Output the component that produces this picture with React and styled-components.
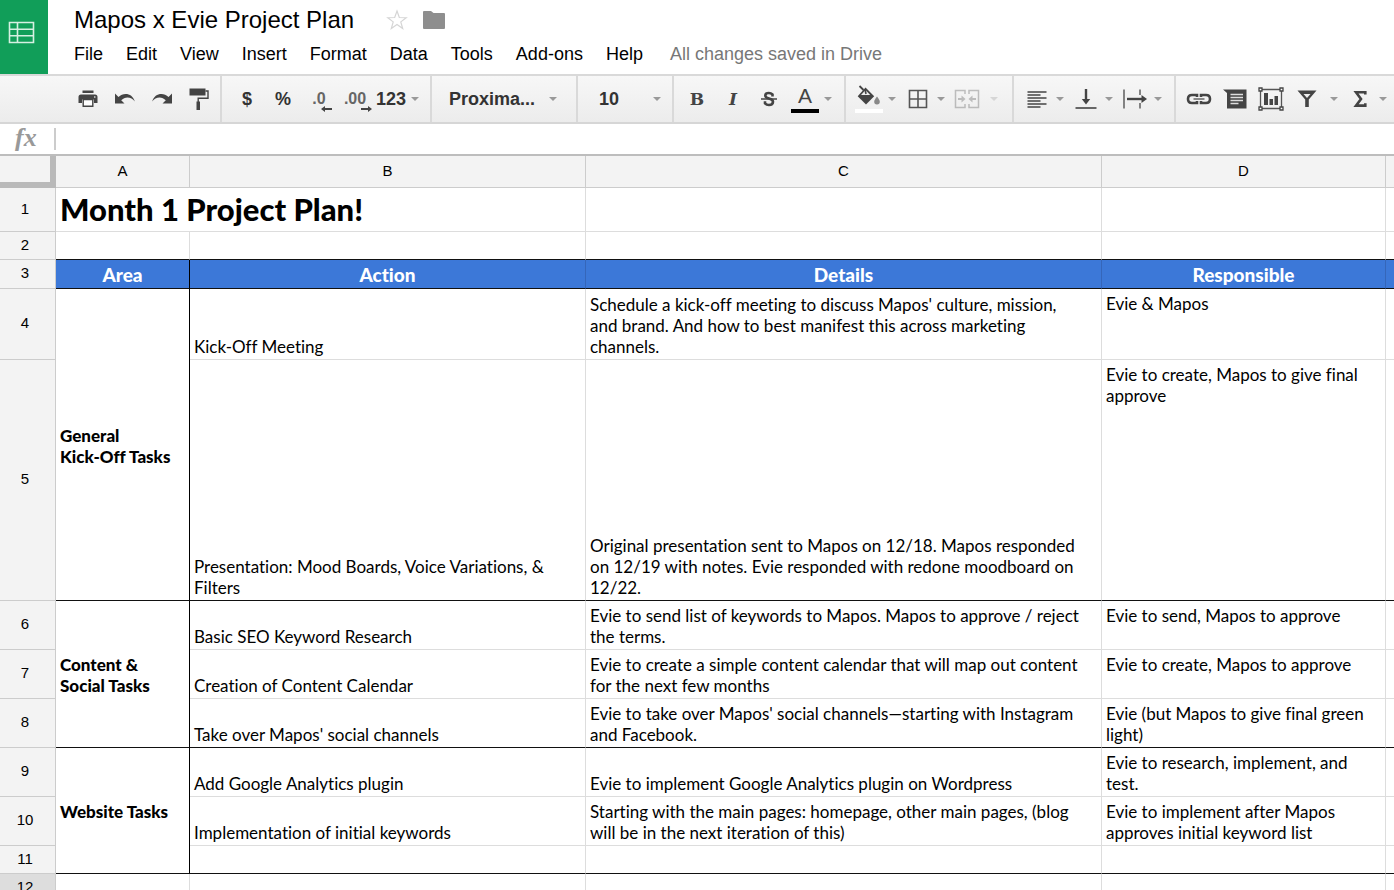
import React from 'react';
import styled, { createGlobalStyle } from 'styled-components';

const GlobalStyle = createGlobalStyle`
  * {
    box-sizing: border-box;
  }
  body {
    margin: 0;
    background: #fff;
    color: #000;
    font-family: "Liberation Sans", Arial, sans-serif;
  }
  button, input, select {
    margin: 0;
    padding: 0;
    border: 0;
    background: none;
    color: inherit;
    font: inherit;
  }
`;

const Page = styled.div`
  display: flex;
  flex-direction: column;
  height: 100vh;
  overflow: hidden;
`;

const Header = styled.header`
  display: flex;
  height: 74px;
  flex: none;
`;
const HomeLink = styled.a`
  width: 48px;
  padding: 21px 0 0 8px;
  background: #119e59;
`;
const HeaderMain = styled.div`
  display: flex;
  flex-direction: column;
  padding: 4px 0 0 26px;
`;
const TitleRow = styled.div`
  display: flex;
  align-items: center;
  height: 32px;
`;
const Title = styled.h1`
  margin: 0 32px 0 0;
  font-size: 24px;
  font-weight: 400;
  line-height: 32px;
  white-space: nowrap;
`;
const TitleButton = styled.button`
  display: flex;
  margin-right: 14px;
`;
const MenuBar = styled.nav`
  display: flex;
  align-items: center;
  gap: 23px;
  height: 36px;
  font-size: 18px;
  white-space: nowrap;
`;
const SaveStatus = styled.span`
  margin-left: 4px;
  color: #777;
`;

const Toolbar = styled.div`
  display: flex;
  flex: none;
  height: 50px;
  border-top: 2px solid #d9d9d9;
  border-bottom: 2px solid #d6d6d6;
  background: linear-gradient(#f7f7f7, #ececec);
  overflow: hidden;
`;
const ToolGroup = styled.div`
  display: flex;
  flex: none;
  align-items: center;
  width: ${(props) => props.$width}px;
  padding-left: ${(props) => props.$indent || 5}px;
  border-right: 2px solid #d9d9d9;
  &:last-child {
    flex: 1 0 auto;
    border-right: 0;
  }
`;
const ToolButton = styled.button`
  display: flex;
  flex: none;
  align-items: center;
  justify-content: center;
  width: 36px;
  height: 44px;
  color: ${(props) => (props.$dark ? '#333' : '#444')};
  font-size: 18px;
  font-weight: 700;
`;
const HistoryButton = styled(ToolButton)`
  width: 37px;
`;
const MenuButton = styled.button`
  display: flex;
  flex: none;
  align-items: center;
  width: ${(props) => (props.$wide ? 53 : 49)}px;
  height: 44px;
  color: #444;
  opacity: ${(props) => (props.disabled ? 0.3 : 1)};
  > span {
    display: flex;
    justify-content: center;
    width: 36px;
    margin-right: ${(props) => (props.$wide ? 4 : 0)}px;
  }
`;
const FormatButton = styled.button`
  display: flex;
  align-items: center;
  gap: 4px;
  padding-left: 3px;
  color: #333;
  font-size: 18px;
  font-weight: 700;
`;
const SelectBox = styled.label`
  display: flex;
  flex: 1;
  align-items: center;
  padding-right: ${(props) => props.$inset}px;
  color: #333;
  select {
    flex: 1;
    min-width: 0;
    appearance: none;
    font-size: 18px;
    font-weight: 700;
  }
`;
const Decimal = styled.span`
  display: flex;
  flex-direction: column;
  padding-top: 5px;
  color: #666;
  font-size: 16px;
  line-height: 14px;
  svg {
    align-self: flex-end;
    margin-right: -6px;
  }
`;
const Bold = styled.span`
  font-family: "DejaVu Serif", serif;
  font-size: 17px;
  font-weight: 700;
`;
const Italic = styled(Bold)`
  font-style: italic;
`;
const Strike = styled.span`
  font-size: 18px;
`;
const Swatch = styled.span`
  display: flex;
  flex-direction: column;
  align-items: center;
  width: 28px;
  height: 28px;
  border-bottom: 4px solid ${(props) => props.$color};
  font-size: 21px;
  line-height: 22px;
`;

const FormulaBar = styled.label`
  display: flex;
  flex: none;
  align-items: center;
  height: 32px;
  border-bottom: 2px solid #bdbdbd;
  input {
    flex: 1;
    height: 22px;
    padding-left: 6px;
    border-left: 2px solid #ccc;
    outline: 0;
  }
`;
const FxLabel = styled.span`
  width: 54px;
  padding: 0 0 2px 15px;
  color: #999;
  font-family: "Liberation Serif", serif;
  font-size: 26px;
  font-style: italic;
  font-weight: 700;
  line-height: 26px;
`;

const Sheet = styled.table`
  width: 100%;
  table-layout: fixed;
  border-collapse: separate;
  border-spacing: 0;
  font-family: Lato, sans-serif;
  font-size: 17px;
  font-variant-ligatures: none;
  line-height: 21px;
`;
const Column = styled.col`
  width: ${(props) => props.$width}px;
`;
const Row = styled.tr`
  height: ${(props) => props.$height}px;
  > :last-child {
    border-right: 0;
  }
`;
const Corner = styled.th`
  padding: 0;
  border: solid #b9b9b9;
  border-width: 0 6px 6px 0;
  background: #f3f3f3;
`;
const Heading = styled.th`
  padding: 0 0 2px;
  border: solid #ccc;
  border-width: 0 1px 1px 0;
  background: ${(props) => (props.$selected ? '#ddd' : '#f3f3f3')};
  font-family: "Liberation Sans", Arial, sans-serif;
  font-size: 15px;
  font-weight: 400;
  line-height: 20px;
`;
const RowHeading = styled(Heading)`
  padding-right: 5px;
`;
const Cell = styled.td`
  padding: 4px 4px 2px;
  border: solid #ddd;
  border-width: 0 1px 1px 0;
  border-bottom-color: ${(props) => (props.$ruled ? '#111' : '#ddd')};
  vertical-align: ${(props) => (props.$top ? 'top' : 'bottom')};
  white-space: pre-line;
`;
const AreaCell = styled(Cell)`
  border-right-color: #000;
  font-weight: 900;
  vertical-align: middle;
`;
const SheetTitle = styled(Cell)`
  padding: 2px 4px 3px;
  font-size: 31px;
  font-weight: 900;
  line-height: 36px;
  vertical-align: middle;
`;
const BlueHead = styled.th`
  padding: 0;
  border: solid #111;
  border-width: 0 1px 1px 0;
  border-right-color: ${(props) => (props.$divider ? '#000' : '#3566ba')};
  background: #3c78d8;
  color: #fff;
  font-size: 19px;
  font-weight: 900;
`;

const rows = [
  {
    number: 4,
    height: 71,
    area: 'General\nKick-Off Tasks',
    span: 2,
    action: 'Kick-Off Meeting',
    details: "Schedule a kick-off meeting to discuss Mapos' culture, mission,\nand brand. And how to best manifest this across marketing\nchannels.",
    responsible: 'Evie & Mapos',
  },
  {
    number: 5,
    height: 241,
    action: 'Presentation: Mood Boards, Voice Variations, &\nFilters',
    details: 'Original presentation sent to Mapos on 12/18. Mapos responded\non 12/19 with notes. Evie responded with redone moodboard on\n12/22.',
    responsible: 'Evie to create, Mapos to give final\napprove',
    ruled: true,
  },
  {
    number: 6,
    height: 49,
    area: 'Content &\nSocial Tasks',
    span: 3,
    action: 'Basic SEO Keyword Research',
    details: 'Evie to send list of keywords to Mapos. Mapos to approve / reject\nthe terms.',
    responsible: 'Evie to send, Mapos to approve',
  },
  {
    number: 7,
    height: 49,
    action: 'Creation of Content Calendar',
    details: 'Evie to create a simple content calendar that will map out content\nfor the next few months',
    responsible: 'Evie to create, Mapos to approve',
  },
  {
    number: 8,
    height: 49,
    action: "Take over Mapos' social channels",
    details: "Evie to take over Mapos' social channels—starting with Instagram\nand Facebook.",
    responsible: 'Evie (but Mapos to give final green\nlight)',
    ruled: true,
  },
  {
    number: 9,
    height: 49,
    area: 'Website Tasks',
    span: 3,
    action: 'Add Google Analytics plugin',
    details: 'Evie to implement Google Analytics plugin on Wordpress',
    responsible: 'Evie to research, implement, and\ntest.',
  },
  {
    number: 10,
    height: 49,
    action: 'Implementation of initial keywords',
    details: 'Starting with the main pages: homepage, other main pages, (blog\nwill be in the next iteration of this)',
    responsible: 'Evie to implement after Mapos\napproves initial keyword list',
  },
  {
    number: 11,
    height: 28,
    ruled: true,
  },
];

const Arrow = () => (
  <svg width="10" height="6" viewBox="0 0 10 6">
    <path d="M1 1h8L5 5z" fill="#999" />
  </svg>
);

const SheetsIcon = () => (
  <svg width="27" height="23" viewBox="0 0 27 23" fill="none" stroke="#d6f0e2" strokeWidth="1.6">
    <path d="M1.5 1.5h24v20h-24zM1.5 8.2h24M1.5 14.8h24M9.5 1.5v20" />
  </svg>
);

const StarIcon = () => (
  <svg width="22" height="22" viewBox="0 0 22 22" fill="none" stroke="#d5d5d5" strokeWidth="1.2">
    <path d="M11 2l2.3 6.5 6.9.2-5.4 4.2 1.9 6.6-5.7-3.9-5.7 3.9 1.9-6.6L1.8 8.7l6.9-.2z" />
  </svg>
);

const FolderIcon = () => (
  <svg width="24" height="20" viewBox="0 0 24 20" fill="#8e8e8e">
    <path d="M1 2Q1 1 2 1H9l2.5 2H22Q23 3 23 4V18Q23 19 22 19H2Q1 19 1 18z" />
  </svg>
);

const PrintIcon = () => (
  <svg width="20" height="18" viewBox="0 0 20 18">
    <path d="M4.500.5h11v2.500h-11zM3 4.500h14q2.500 0 2.500 2.500V13H16V9.500H4V13H.5V7Q.5 4.500 3 4.500z" fill="#444" />
    <path d="M5.200 9.500h9.600v6.800H5.200z" fill="#fff" stroke="#444" strokeWidth="1.400" />
    <circle cx="16.800" cy="7" r=".8" fill="#fff" />
  </svg>
);

const CurvedArrow = ({ flip }) => (
  <svg width="22" height="14" viewBox="0 0 22 14" fill="#444">
    <path
      transform={flip ? 'matrix(-1 0 0 1 22 0)' : undefined}
      d="M1 1.500v10h9.500L7.200 8.300C11 4 17.500 4.500 20.800 9.500 18.500 1 9.500 0 4.500 5z"
    />
  </svg>
);

const PaintIcon = () => (
  <svg width="20" height="24" viewBox="0 0 20 24">
    <path d="M.5 1.500h16v7H.5zM7.500 14.500H11V23H7.500z" fill="#444" />
    <path d="M16.500 4h2.500v7.200H9.200V15" fill="none" stroke="#444" strokeWidth="1.400" />
  </svg>
);

const SmallArrow = ({ right }) => (
  <svg width="11" height="6" viewBox="0 0 11 6" fill="#444">
    <path
      transform={right ? 'matrix(-1 0 0 1 11 0)' : undefined}
      d="M0 3l4-3v2h7v2H4v2z"
    />
  </svg>
);

const StrikeIcon = () => (
  <svg width="18" height="16" viewBox="0 0 18 16" fill="none" stroke="#444">
    <path d="M12.500 5.500V3.500Q11 2 8.800 2 5.300 2 5.300 4.500q0 2 3.700 3 4 1 4 3.300Q13 14 9 14q-2.500 0-4-1.700v-2" strokeWidth="2.600" />
    <path d="M1 8h16" strokeWidth="1.500" />
  </svg>
);

const FillIcon = () => (
  <svg width="24" height="22" viewBox="0 0 24 22">
    <path d="M2.500 1l4 4" stroke="#444" strokeWidth="1.800" />
    <path d="M8.500 2.500l8.700 8.700-8.200 8.300L.7 11.200z" fill="#444" />
    <path d="M8.500 5l4.700 5H4z" fill="#eee" />
    <path d="M8 4l1 5" stroke="#444" strokeWidth="1.600" />
    <path d="M20 11.500c-1.600 2.400-2.800 3.700-2.800 5.200a2.800 2.800 0 005.600 0c0-1.500-1.200-2.800-2.800-5.200z" fill="#888" />
  </svg>
);

const BordersIcon = () => (
  <svg width="20" height="20" viewBox="0 0 20 20" fill="none" stroke="#555" strokeWidth="1.600">
    <path d="M1.500 1.500h17v17h-17zM10 1.500v17M1.500 10h17" />
  </svg>
);

const MergeIcon = () => (
  <svg width="26" height="20" viewBox="0 0 26 20" fill="none" stroke="#444" strokeWidth="1.500">
    <path d="M11 5V1.500H1.500v17H11V15M15 5V1.500h9.500v17H15V15" />
    <path d="M4 10h5M22 10h-5" strokeWidth="2" />
    <path d="M7.500 6.500L11.500 10l-4 3.500zM18.500 6.500L14.500 10l4 3.500z" fill="#444" stroke="none" />
  </svg>
);

const AlignIcon = () => (
  <svg width="20" height="18" viewBox="0 0 20 18" stroke="#444" strokeWidth="1.600">
    <path d="M.5 2h19M.5 5h13M.5 8h19M.5 11h13M.5 14h19M.5 17h13" />
  </svg>
);

const BottomIcon = () => (
  <svg width="22" height="22" viewBox="0 0 22 22">
    <path d="M.5 20h21" stroke="#666" strokeWidth="2" />
    <path d="M11 1v12" stroke="#444" strokeWidth="2.400" />
    <path d="M6.800 11h8.400L11 16.500z" fill="#444" />
  </svg>
);

const WrapIcon = () => (
  <svg width="26" height="20" viewBox="0 0 26 20">
    <path d="M2 .5v19M18 .5V6M18 14v5.500" stroke="#777" strokeWidth="1.800" />
    <path d="M5 10h16" stroke="#444" strokeWidth="2.400" />
    <path d="M19.500 6l5.500 4-5.500 4z" fill="#444" />
  </svg>
);

const LinkIcon = () => (
  <svg width="26" height="12" viewBox="0 0 26 12" fill="none" stroke="#444" strokeWidth="2.600">
    <path d="M11 4V2H6Q2 2 2 6t4 4h5V8M15 4V2h5q4 0 4 4t-4 4h-5V8" />
    <path d="M7.500 6h11" stroke="#888" strokeWidth="2" />
  </svg>
);

const CommentIcon = () => (
  <svg width="24" height="20" viewBox="0 0 24 20">
    <path d="M0 .5h23.500v19H4V4z" fill="#444" />
    <path d="M7.500 5.500h12.500M7.500 8.500h12.500M7.500 11.500h12.500M7.500 14.500h8" stroke="#ddd" strokeWidth="1.300" />
  </svg>
);

const ChartIcon = () => (
  <svg width="26" height="24" viewBox="0 0 26 24">
    <path d="M2.500 2.500h21v19h-21z" fill="none" stroke="#555" strokeWidth="1.300" />
    <path
      d="M1 1h3v3H1zM22 1h3v3h-3zM1 20h3v3H1zM22 20h3v3h-3z"
      fill="#fff"
      stroke="#444"
      strokeWidth="1.300"
    />
    <path d="M6 6h4v12H6zM11.500 12h3.500v6h-3.500zM16.500 9H20v9h-3.500z" fill="#444" />
  </svg>
);

const FilterIcon = () => (
  <svg width="20" height="18" viewBox="0 0 20 18">
    <path d="M.5.500h19L11.800 9.500V17H8.200V9.500z" fill="#444" />
    <path d="M6.500 4h7L10 8z" fill="#eee" />
  </svg>
);

const SumIcon = () => (
  <svg width="14" height="18" viewBox="0 0 14 18" fill="none" stroke="#444" strokeWidth="2.600">
    <path d="M12.300 4.500V2.200H3L8 9l-5 6.600h9.300v-2.400" />
  </svg>
);

const menus = ['File', 'Edit', 'View', 'Insert', 'Format', 'Data', 'Tools', 'Add-ons', 'Help'];

const DocHeader = () => (
  <Header>
    <HomeLink href="#" aria-label="Sheets home">
      <SheetsIcon />
    </HomeLink>
    <HeaderMain>
      <TitleRow>
        <Title>Mapos x Evie Project Plan</Title>
        <TitleButton aria-label="Star">
          <StarIcon />
        </TitleButton>
        <TitleButton aria-label="Move to folder">
          <FolderIcon />
        </TitleButton>
      </TitleRow>
      <MenuBar>
        {menus.map((menu) => (
          <button key={menu} type="button">{menu}</button>
        ))}
        <SaveStatus>All changes saved in Drive</SaveStatus>
      </MenuBar>
    </HeaderMain>
  </Header>
);

const ToolMenu = ({ label, children, wide, disabled }) => (
  <MenuButton aria-label={label} $wide={wide} disabled={disabled}>
    <span>{children}</span>
    <Arrow />
  </MenuButton>
);

const Tools = () => (
  <Toolbar>
    <ToolGroup $width={222} $indent={69}>
      <HistoryButton aria-label="Print"><PrintIcon /></HistoryButton>
      <HistoryButton aria-label="Undo"><CurvedArrow /></HistoryButton>
      <HistoryButton aria-label="Redo"><CurvedArrow flip /></HistoryButton>
      <HistoryButton aria-label="Paint format"><PaintIcon /></HistoryButton>
    </ToolGroup>
    <ToolGroup $width={210} $indent={7}>
      <ToolButton $dark>$</ToolButton>
      <ToolButton $dark>%</ToolButton>
      <ToolButton>
        <Decimal>
          .0
          <SmallArrow />
        </Decimal>
      </ToolButton>
      <ToolButton>
        <Decimal>
          .00
          <SmallArrow right />
        </Decimal>
      </ToolButton>
      <FormatButton>
        123
        <Arrow />
      </FormatButton>
    </ToolGroup>
    <ToolGroup $width={146} $indent={17}>
      <SelectBox $inset={18}>
        <select aria-label="Font">
          <option>Proxima...</option>
        </select>
        <Arrow />
      </SelectBox>
    </ToolGroup>
    <ToolGroup $width={96} $indent={21}>
      <SelectBox $inset={10}>
        <select aria-label="Font size">
          <option>10</option>
        </select>
        <Arrow />
      </SelectBox>
    </ToolGroup>
    <ToolGroup $width={172}>
      <ToolButton aria-label="Bold"><Bold>B</Bold></ToolButton>
      <ToolButton aria-label="Italic"><Italic>I</Italic></ToolButton>
      <ToolButton aria-label="Strikethrough"><StrikeIcon /></ToolButton>
      <ToolMenu label="Text color"><Swatch $color="#000">A</Swatch></ToolMenu>
    </ToolGroup>
    <ToolGroup $width={168}>
      <ToolMenu label="Fill color"><Swatch $color="#fff"><FillIcon /></Swatch></ToolMenu>
      <ToolMenu label="Borders"><BordersIcon /></ToolMenu>
      <ToolMenu label="Merge cells" wide disabled><MergeIcon /></ToolMenu>
    </ToolGroup>
    <ToolGroup $width={162}>
      <ToolMenu label="Horizontal align"><AlignIcon /></ToolMenu>
      <ToolMenu label="Vertical align"><BottomIcon /></ToolMenu>
      <ToolMenu label="Text wrapping"><WrapIcon /></ToolMenu>
    </ToolGroup>
    <ToolGroup>
      <ToolButton aria-label="Insert link"><LinkIcon /></ToolButton>
      <ToolButton aria-label="Insert comment"><CommentIcon /></ToolButton>
      <ToolButton aria-label="Insert chart"><ChartIcon /></ToolButton>
      <ToolMenu label="Filter" wide><FilterIcon /></ToolMenu>
      <ToolMenu label="Functions"><SumIcon /></ToolMenu>
    </ToolGroup>
  </Toolbar>
);

const Grid = () => (
  <Sheet>
    <colgroup>
      <Column $width={56} />
      <Column $width={134} />
      <Column $width={396} />
      <Column $width={516} />
      <Column $width={284} />
      <col />
    </colgroup>
    <thead>
      <Row $height={32}>
        <Corner />
        <Heading>A</Heading>
        <Heading>B</Heading>
        <Heading>C</Heading>
        <Heading>D</Heading>
        <Heading />
      </Row>
    </thead>
    <tbody>
      <Row $height={44}>
        <RowHeading>1</RowHeading>
        <SheetTitle colSpan={2}>Month 1 Project Plan!</SheetTitle>
        <Cell />
        <Cell />
        <Cell />
      </Row>
      <Row $height={28}>
        <RowHeading>2</RowHeading>
        <Cell $ruled />
        <Cell $ruled />
        <Cell $ruled />
        <Cell $ruled />
        <Cell $ruled />
      </Row>
      <Row $height={29}>
        <RowHeading>3</RowHeading>
        <BlueHead $divider>Area</BlueHead>
        <BlueHead>Action</BlueHead>
        <BlueHead>Details</BlueHead>
        <BlueHead>Responsible</BlueHead>
        <BlueHead />
      </Row>
      {rows.map((row) => (
        <Row key={row.number} $height={row.height}>
          <RowHeading>{row.number}</RowHeading>
          {row.area && <AreaCell rowSpan={row.span} $ruled>{row.area}</AreaCell>}
          <Cell $ruled={row.ruled}>{row.action}</Cell>
          <Cell $ruled={row.ruled}>{row.details}</Cell>
          <Cell $ruled={row.ruled} $top>{row.responsible}</Cell>
          <Cell $ruled={row.ruled} />
        </Row>
      ))}
      <Row $height={28}>
        <RowHeading $selected>12</RowHeading>
        <Cell />
        <Cell />
        <Cell />
        <Cell />
        <Cell />
      </Row>
    </tbody>
  </Sheet>
);

const App = () => (
  <Page>
    <GlobalStyle />
    <DocHeader />
    <Tools />
    <FormulaBar>
      <FxLabel>fx</FxLabel>
      <input type="text" aria-label="Formula" />
    </FormulaBar>
    <Grid />
  </Page>
);

export default App;
